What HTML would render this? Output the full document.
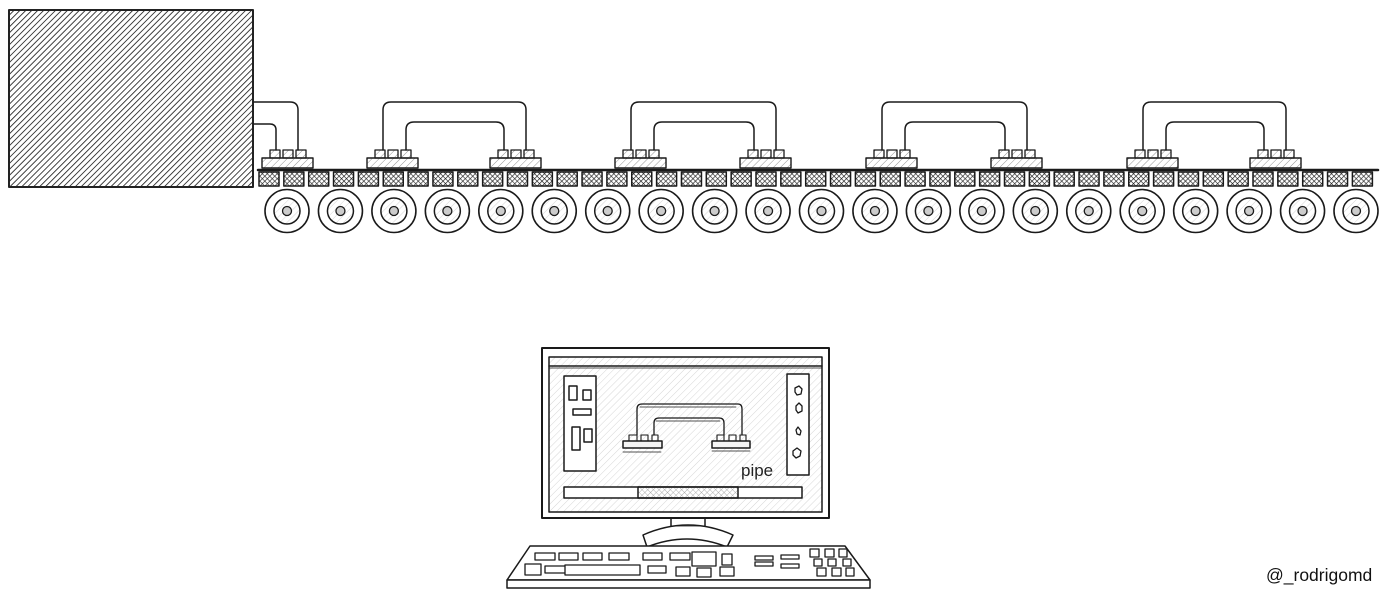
<!DOCTYPE html>
<html><head><meta charset="utf-8"><style>
html,body{margin:0;padding:0;background:#fff;width:1400px;height:598px;overflow:hidden}
svg{display:block}
</style></head><body>
<svg id="s" width="1400" height="598" viewBox="0 0 1400 598" xmlns="http://www.w3.org/2000/svg">
<defs>
<pattern id="h1" width="4.2" height="4.2" patternUnits="userSpaceOnUse" patternTransform="rotate(45)"><line x1="0" y1="0" x2="0" y2="4.2" stroke="#222" stroke-width="1.7"/></pattern>
<pattern id="h2" width="5" height="5" patternUnits="userSpaceOnUse" patternTransform="rotate(45)"><line x1="0" y1="0" x2="0" y2="5" stroke="#888" stroke-width="0.9"/></pattern>
<pattern id="x1" width="3.5" height="3.5" patternUnits="userSpaceOnUse" patternTransform="rotate(45)"><path d="M0 0V3.5M0 0H3.5" stroke="#222" stroke-width="1.3"/></pattern>
<pattern id="g1" width="5" height="5" patternUnits="userSpaceOnUse" patternTransform="rotate(45)"><path d="M0 0V5" stroke="#ccc" stroke-width="0.8"/></pattern>
<pattern id="x2" width="4" height="4" patternUnits="userSpaceOnUse" patternTransform="rotate(45)"><path d="M0 0V4M0 0H4" stroke="#999" stroke-width="0.8"/></pattern>
</defs>
<g id="g" fill="none" stroke="#1a1a1a" stroke-width="1.5" stroke-linecap="round" stroke-linejoin="round">
<rect x="9" y="10" width="244" height="177" fill="url(#h1)" stroke="#222" stroke-width="2"/>
<line x1="258" y1="170" x2="1378" y2="170" stroke-width="2.5"/>
<!-- monitor -->
<rect x="542" y="348" width="287" height="170" stroke-width="2"/>
<rect x="549" y="357" width="273" height="155" fill="url(#g1)"/>
<line x1="549" y1="366" x2="822" y2="366"/>
<line x1="549" y1="368" x2="822" y2="368" stroke-width="0.8"/>
<rect x="564" y="376" width="32" height="95" fill="#fff"/>
<rect x="569" y="386" width="8" height="14"/><rect x="583" y="390" width="8" height="10"/>
<rect x="573" y="409" width="18" height="6"/>
<rect x="572" y="427" width="8" height="23"/><rect x="584" y="429" width="8" height="13"/>
<rect x="787" y="374" width="22" height="101" fill="#fff"/>
<path d="M795 388l4-2 3 3-1 5-4 1-2-3z M796 406l3-3 3 3v5l-4 2-2-3z M798 427l3 4-1 4-3-1-1-4z M793 451l4-3 4 3-1 5-4 2-3-3z" stroke-width="1.3"/>
<rect x="564" y="487" width="238" height="11" fill="#fff"/>
<rect x="638" y="487" width="100" height="11" fill="url(#x2)"/>
<text x="741" y="476" font-family="'Liberation Sans',sans-serif" font-size="17" fill="#222" stroke="none">pipe</text>
<!-- mini pipe -->
<path d="M623 448h39v-7h-39z M712 448h38v-7h-38z" fill="#f4f4f4"/>
<path d="M629 441v-6h8v6 M641 441v-6h7v6 M652 441v-6h6v6 M717 441v-6h7v6 M729 441v-6h7v6 M740 441v-6h6v6" stroke-width="1.1"/>
<path d="M637 435v-26q0-5 5-5h96q4 0 4 5v26 M654 435v-12q0-5 5-5h60q5 0 5 5v12" stroke-width="1.3"/>
<path d="M640 407h96 M656 421h64 M623 452h38 M712 451h38" stroke-width="0.8"/>
<!-- stand -->
<path d="M671 519v15h34v-15" />
<path d="M643 535q45-20 90 0l-6 12q-40-16-80 0z" fill="#fff"/>
<line x1="671" y1="526" x2="705" y2="526" stroke-width="0.8"/>
<!-- keyboard -->
<path d="M530 546h315l25 34h-363z" fill="#fff"/>
<rect x="507" y="580" width="363" height="8" fill="#fff"/>
<path d="M535 553h20v7h-20z M559 553h19v7h-19z M583 553h19v7h-19z M609 553h20v7h-20z M643 553h19v7h-19z M670 553h20v7h-20z M692 552h24v14h-24z M722 554h10v11h-10z M755 556h18v4h-18z M781 555h18v4h-18z M755 562h18v4h-18z M781 564h18v4h-18z M810 549h9v8h-9z M825 549h9v8h-9z M839 549h8v8h-8z M814 559h8v7h-8z M828 559h8v7h-8z M843 559h8v7h-8z M817 568h9v8h-9z M832 568h9v8h-9z M846 568h8v8h-8z M525 564h16v11h-16z M545 566h20v7h-20z M565 565h75v10h-75z M648 566h18v7h-18z M676 567h14v9h-14z M697 568h14v9h-14z M720 567h14v9h-14z" stroke-width="1.3"/>
<text x="1266" y="581" font-family="'Liberation Sans',sans-serif" font-size="17.5" fill="#111" stroke="none">@_rodrigomd</text>
</g>
</svg>
<script>
var g=document.getElementById('g'),NS='http://www.w3.org/2000/svg';
function el(t,a){var e=document.createElementNS(NS,t);for(var k in a)e.setAttribute(k,a[k]);g.appendChild(e);return e;}
for(var x=259;x<1376;x+=24.85){el('rect',{x:x,y:172,width:20,height:14,fill:'url(#x1)','stroke-width':1.5});}
for(var i=0;i<21;i++){var cx=287+i*53.45,cy=211;
el('ellipse',{cx:cx,cy:cy,rx:22,ry:21.5,'stroke-width':1.6});
el('circle',{cx:cx,cy:cy,r:13,fill:'url(#g1)','stroke-width':1.5});
el('circle',{cx:cx,cy:cy,r:4.5,fill:'#ccc','stroke-width':1.3});}
function plate(x){el('rect',{x:x,y:158,width:51,height:10,fill:'url(#h2)','stroke-width':1.4});
for(var j=0;j<3;j++)el('rect',{x:x+8+j*13,y:150,width:10,height:8,fill:'url(#h2)','stroke-width':1.3});}
plate(262);
el('path',{d:'M254 102h36q8 0 8 8v40 M254 124h16q6 0 6 6v20'});
var P=[367,615,866,1127],Q=[490,740,991,1250];
for(var k=0;k<4;k++){var a=P[k],b=Q[k];plate(a);plate(b);
el('path',{d:'M'+(a+16)+' 150v-40q0-8 8-8h'+(b+36-a-16-16)+'q8 0 8 8v40'});
el('path',{d:'M'+(a+39)+' 150v-20q0-8 8-8h'+(b+14-a-39-16)+'q8 0 8 8v20'});}
</script>
</body></html>
